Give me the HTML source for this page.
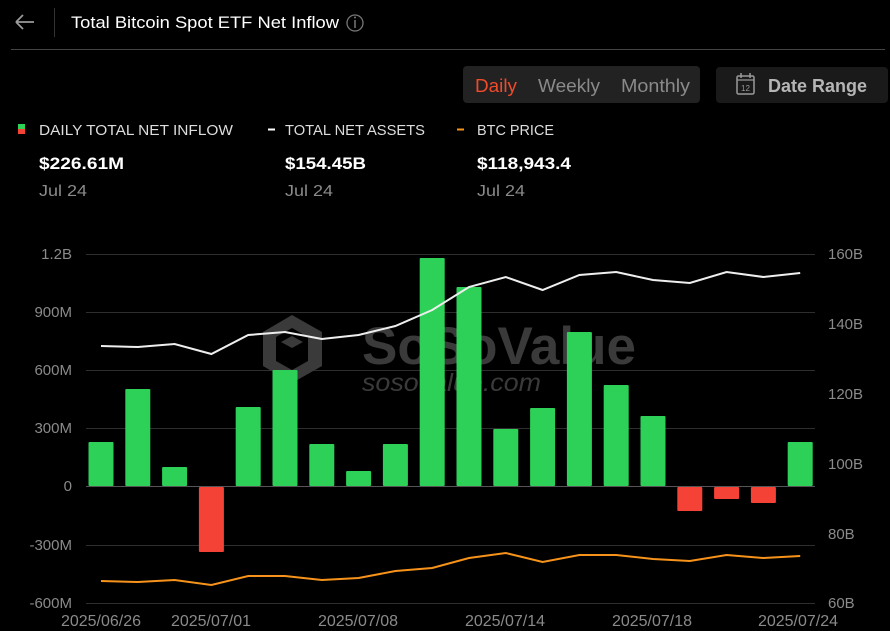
<!DOCTYPE html>
<html><head><meta charset="utf-8"><style>
html,body{margin:0;padding:0;background:#000;width:890px;height:631px;overflow:hidden;font-family:"Liberation Sans",sans-serif;}
</style></head><body>
<svg width="890" height="631" xmlns="http://www.w3.org/2000/svg" font-family="Liberation Sans, sans-serif">
<rect width="890" height="631" fill="#000"/>
<!-- header -->
<path d="M16 22 H34 M16 22 L23 15 M16 22 L23 29" stroke="#9a9a9a" stroke-width="1.8" fill="none"/>
<line x1="54.5" y1="8" x2="54.5" y2="37" stroke="#333" stroke-width="1"/>
<text x="71" y="28" fill="#fff" font-size="17" textLength="268" lengthAdjust="spacingAndGlyphs">Total Bitcoin Spot ETF Net Inflow</text>
<circle cx="355" cy="23" r="8" fill="none" stroke="#777" stroke-width="1.3"/>
<line x1="355" y1="20" x2="355" y2="28" stroke="#777" stroke-width="1.5"/>
<circle cx="355" cy="17.5" r="1" fill="#777"/>
<line x1="11" y1="49.5" x2="885" y2="49.5" stroke="#444" stroke-width="1"/>
<!-- tabs -->
<rect x="463" y="66" width="237" height="37" rx="4" fill="#222"/>
<text x="475" y="92" fill="#f04a2b" font-size="18" textLength="42" lengthAdjust="spacingAndGlyphs">Daily</text>
<text x="538" y="92" fill="#8a8a8a" font-size="18" textLength="62" lengthAdjust="spacingAndGlyphs">Weekly</text>
<text x="621" y="92" fill="#8a8a8a" font-size="18" textLength="69" lengthAdjust="spacingAndGlyphs">Monthly</text>
<rect x="716" y="67" width="172" height="36" rx="4" fill="#1a1a1a"/>
<rect x="737" y="76" width="17" height="18" rx="1.5" fill="none" stroke="#999" stroke-width="1.5"/>
<line x1="737" y1="80" x2="754" y2="80" stroke="#999" stroke-width="1.3"/>
<line x1="741" y1="73" x2="741" y2="78" stroke="#999" stroke-width="1.5"/>
<line x1="750" y1="73" x2="750" y2="78" stroke="#999" stroke-width="1.5"/>
<text x="745.5" y="91" fill="#999" font-size="8" text-anchor="middle">12</text>
<text x="768" y="92" fill="#b5b5b5" font-size="18" font-weight="bold" textLength="99" lengthAdjust="spacingAndGlyphs">Date Range</text>
<!-- legend -->
<rect x="18" y="124" width="7" height="5" fill="#2ed158"/>
<rect x="18" y="129" width="7" height="5" fill="#f44336"/>
<text x="39" y="135" fill="#ddd" font-size="15" textLength="194" lengthAdjust="spacingAndGlyphs">DAILY TOTAL NET INFLOW</text>
<rect x="268" y="128.5" width="7" height="2" fill="#fff"/>
<text x="285" y="135" fill="#ddd" font-size="15" textLength="140" lengthAdjust="spacingAndGlyphs">TOTAL NET ASSETS</text>
<rect x="457" y="128.5" width="7" height="2" fill="#f7931a"/>
<text x="477" y="135" fill="#ddd" font-size="15" textLength="77" lengthAdjust="spacingAndGlyphs">BTC PRICE</text>
<text x="39" y="169" fill="#fff" font-size="17" font-weight="bold" textLength="85" lengthAdjust="spacingAndGlyphs">$226.61M</text>
<text x="285" y="169" fill="#fff" font-size="17" font-weight="bold" textLength="81" lengthAdjust="spacingAndGlyphs">$154.45B</text>
<text x="477" y="169" fill="#fff" font-size="17" font-weight="bold" textLength="94" lengthAdjust="spacingAndGlyphs">$118,943.4</text>
<text x="39" y="196" fill="#8a8a8a" font-size="16" textLength="48" lengthAdjust="spacingAndGlyphs">Jul 24</text>
<text x="285" y="196" fill="#8a8a8a" font-size="16" textLength="48" lengthAdjust="spacingAndGlyphs">Jul 24</text>
<text x="477" y="196" fill="#8a8a8a" font-size="16" textLength="48" lengthAdjust="spacingAndGlyphs">Jul 24</text>
<!-- grid -->
<g stroke="#2e2e2e" stroke-width="1">
<line x1="86" y1="254.5" x2="815" y2="254.5"/>
<line x1="86" y1="312.5" x2="815" y2="312.5"/>
<line x1="86" y1="370.5" x2="815" y2="370.5"/>
<line x1="86" y1="428.5" x2="815" y2="428.5"/>
<line x1="86" y1="545.5" x2="815" y2="545.5"/>
<line x1="86" y1="603.5" x2="815" y2="603.5"/>
</g>
<line x1="86" y1="486.5" x2="815" y2="486.5" stroke="#555" stroke-width="1"/>
<!-- watermark -->
<g fill="#3a3a3a">
<path d="M292 315 L322 332 L322 366 L292 383 L263 366 L263 332 Z M292 328 L276 337 L276 361 L292 370 L308 361 L308 337 Z" fill-rule="evenodd"/>
<path d="M281 342 L292 336 L303 342 L292 348 Z"/>
<text x="362" y="364" font-size="53" font-weight="bold" textLength="274" lengthAdjust="spacingAndGlyphs">SoSoValue</text>
<text x="362" y="391" font-size="25" font-style="italic" textLength="179" lengthAdjust="spacingAndGlyphs">sosovalue.com</text>
</g>
<!-- axis labels -->
<g fill="#8a8a8a" font-size="15" text-anchor="end">
<text x="72" y="259">1.2B</text><text x="72" y="317">900M</text><text x="72" y="375">600M</text>
<text x="72" y="433">300M</text><text x="72" y="491">0</text><text x="72" y="550">-300M</text><text x="72" y="608">-600M</text>
</g>
<g fill="#8a8a8a" font-size="15">
<text x="828" y="259">160B</text><text x="828" y="329">140B</text><text x="828" y="399">120B</text>
<text x="828" y="469">100B</text><text x="828" y="539">80B</text><text x="828" y="608">60B</text>
</g>
<g fill="#8a8a8a" font-size="16" text-anchor="middle">
<text x="101" y="626">2025/06/26</text><text x="211" y="626">2025/07/01</text><text x="358" y="626">2025/07/08</text>
<text x="505" y="626">2025/07/14</text><text x="652" y="626">2025/07/18</text><text x="798" y="626">2025/07/24</text>
</g>
<!-- bars -->
<g fill="#2ed158">
<rect x="88.5" y="442" width="25" height="44" rx="1"/>
<rect x="125.3" y="389" width="25" height="97" rx="1"/>
<rect x="162.1" y="467" width="25" height="19" rx="1"/>
<rect x="235.7" y="407" width="25" height="79" rx="1"/>
<rect x="272.5" y="370" width="25" height="116" rx="1"/>
<rect x="309.3" y="444" width="25" height="42" rx="1"/>
<rect x="346.1" y="471" width="25" height="15" rx="1"/>
<rect x="382.9" y="444" width="25" height="42" rx="1"/>
<rect x="419.7" y="258" width="25" height="228" rx="1"/>
<rect x="456.5" y="287" width="25" height="199" rx="1"/>
<rect x="493.3" y="429" width="25" height="57" rx="1"/>
<rect x="530.1" y="408" width="25" height="78" rx="1"/>
<rect x="566.9" y="332" width="25" height="154" rx="1"/>
<rect x="603.7" y="385" width="25" height="101" rx="1"/>
<rect x="640.5" y="416" width="25" height="70" rx="1"/>
<rect x="787.7" y="442" width="25" height="44" rx="1"/>
</g>
<g fill="#f44336">
<rect x="198.9" y="487" width="25" height="65" rx="1"/>
<rect x="677.3" y="487" width="25" height="24" rx="1"/>
<rect x="714.1" y="487" width="25" height="12" rx="1"/>
<rect x="750.9" y="487" width="25" height="16" rx="1"/>
</g>
<!-- lines -->
<polyline fill="none" stroke="#eee" stroke-width="2" points="101,346 137.8,347 174.6,344 211.4,354 248.2,335 285,332 321.8,339 358.6,335 395.4,326 432.2,310 469,287 505.8,277 542.6,290 579.4,275 616.2,272 653,280 689.8,283 726.6,272 763.4,277 800.2,273"/>
<polyline fill="none" stroke="#f7931a" stroke-width="2" points="101,581 137.8,582 174.6,580 211.4,585 248.2,576 285,576 321.8,580 358.6,578 395.4,571 432.2,568 469,558 505.8,553 542.6,562 579.4,555 616.2,555 653,559 689.8,561 726.6,555 763.4,558 800.2,556"/>
</svg>
</body></html>
